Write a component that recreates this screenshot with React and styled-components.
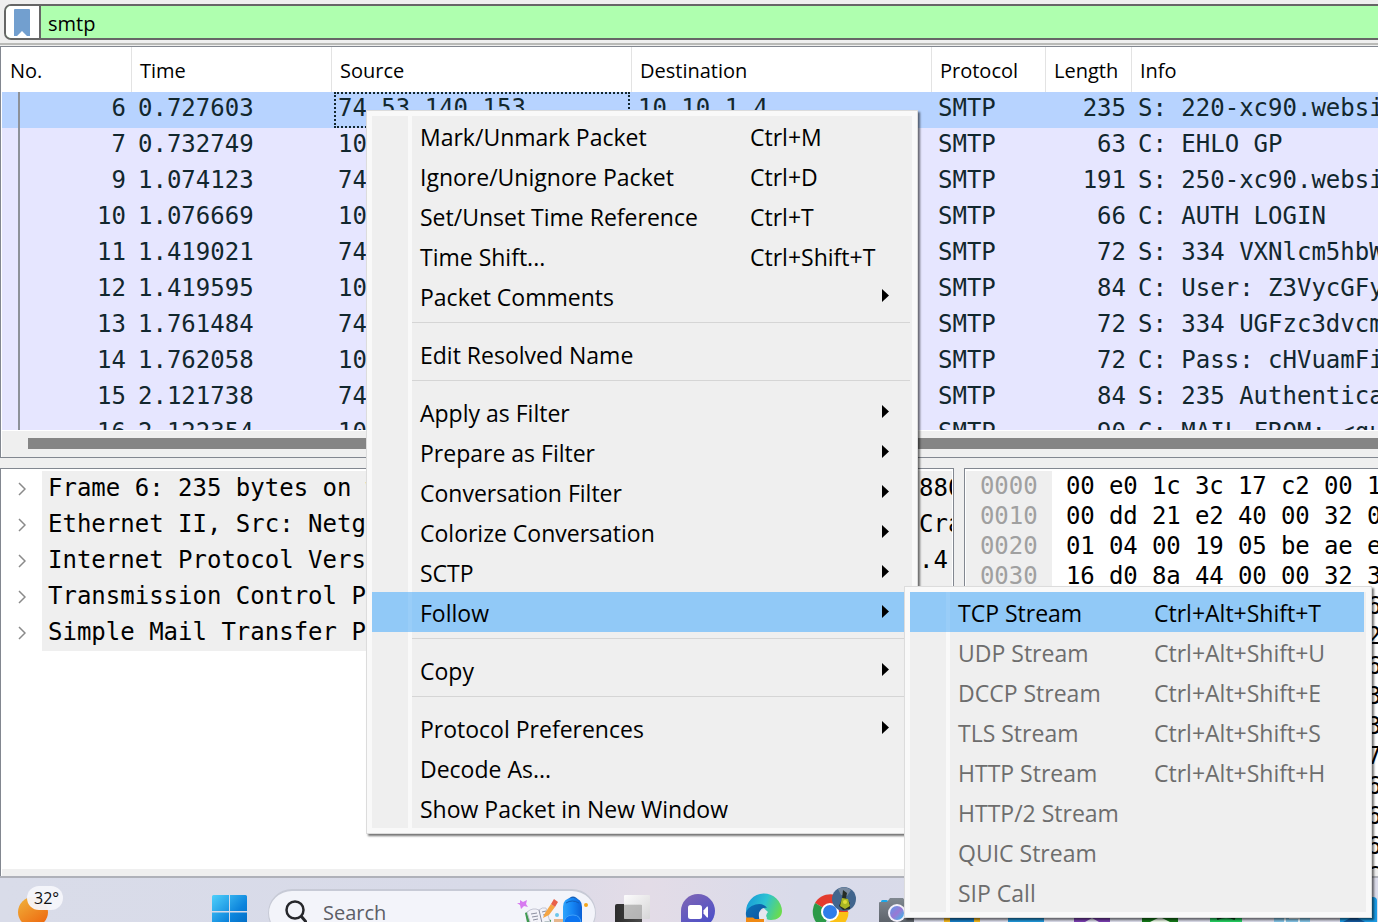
import React from "react";
import styled, { createGlobalStyle, css } from "styled-components";

const GlobalStyle = createGlobalStyle`
  * { box-sizing: border-box; }
  html, body { margin: 0; overflow: hidden; }
  body { background: #efefef; font-family: "Open Sans", "Noto Sans", sans-serif; color: #000; }
  button, input { font: inherit; color: inherit; }
`;

const mono = css`
  font-family: "DejaVu Sans Mono", "Liberation Mono", monospace;
  font-size: 24px;
`;

const Screen = styled.div`
  position: relative;
  display: flex;
  flex-direction: column;
  width: 100%;
  height: 100vh;
  overflow: hidden;
`;

/* ---------- filter bar ---------- */

const FilterBar = styled.form`
  flex: none;
  padding: 4px 0 3px 4px;
  border-bottom: 2px solid #b9bab7;
  margin: 0 0 1px;
`;

const FilterBox = styled.div`
  display: flex;
  height: 36px;
  border: 2px solid #666;
  border-right: 0;
  border-radius: 7px 0 0 7px;
  background: #afffaf;
  overflow: hidden;
`;

const BookmarkButton = styled.button`
  width: 35px;
  padding: 2px 0 0 8px;
  border: 0;
  border-right: 2px solid #666;
  background: #fff;
  text-align: left;
  svg { display: block; }
`;

const FilterInput = styled.input`
  flex: 1;
  min-width: 0;
  padding: 2px 0 0 7px;
  border: 0;
  outline: 0;
  background: transparent;
  font-size: 20px;
`;

/* ---------- packet list ---------- */

const ListFrame = styled.section`
  flex: 411 1 0;
  min-height: 0;
  display: flex;
  flex-direction: column;
  border: 1px solid #828790;
  border-right: 0;
  padding-left: 1px;
  background: #fff;
`;

const ListViewport = styled.div`
  flex: 1;
  min-height: 0;
  overflow: hidden;
`;

const PacketTable = styled.table`
  width: 100%;
  table-layout: fixed;
  border-collapse: separate;
  border-spacing: 0;
  white-space: nowrap;
`;

const Col = styled.col`
  width: ${(p) => (p.$w ? p.$w + "px" : "auto")};
`;

const HeadCell = styled.th`
  height: 45px;
  padding: 2px 0 0 8px;
  border-left: ${(p) => (p.$first ? "0" : "1px solid #e3e3e3")};
  overflow: hidden;
  text-align: left;
  font-size: 20px;
  font-weight: 400;
`;

const PacketRow = styled.tr`
  background: ${(p) => (p.$selected ? "#b7d3ff" : "#e6e6ff")};
  color: #12272e;
`;

const Cell = styled.td`
  ${mono}
  height: 36px;
  padding: 0 0 4px 7px;
  line-height: 32px;
  overflow: hidden;
  ${(p) => p.$number && css`
    padding-right: 5px;
    text-align: right;
  `}
  ${(p) => p.$rail && css`
    background: linear-gradient(#8c9199, #8c9199) 16px 0 / 2px 100% no-repeat;
  `}
  ${(p) => p.$focused && css`
    padding: 0 1px 0 3px;
  `}
`;

const FocusBox = styled.div`
  height: 36px;
  padding-left: 2px;
  border: 2px dotted #12272e;
  line-height: 28px;
`;

const ScrollTrack = styled.div`
  flex: none;
  height: 26px;
  margin-top: 1px;
  padding: 7px 0 8px 26px;
  background: #efefef;
`;

const ScrollThumb = styled.div`
  height: 11px;
  background: #858585;
`;

/* ---------- lower panes ---------- */

const LowerPanes = styled.div`
  flex: 409 1 0;
  min-height: 0;
  display: flex;
  gap: 10px;
  margin-top: 10px;
`;

const Pane = styled.section`
  display: flex;
  flex-direction: column;
  min-width: 0;
  border: 1px solid #828790;
  border-width: 1px 0 0 1px;
  background: #fff;
`;

const TreePane = styled(Pane)`
  flex: 954 1 0;
  border-right-width: 1px;
`;

const HexPane = styled(Pane)`
  flex: 414 1 0;
`;

const PaneBody = styled.div`
  flex: 1;
  min-height: 0;
  overflow: hidden;
  padding: 2px 1px 0;
`;

const PaneFoot = styled.div`
  flex: none;
  height: 7px;
  margin-left: 1px;
  background: #efefef;
`;

const Tree = styled.ul`
  margin: 0;
  padding: 0;
  list-style: none;
`;

const TreeRow = styled.li`
  ${mono}
  display: grid;
  grid-template-columns: 40px 870px 1fr;
  height: 36px;
  white-space: pre;
  line-height: 34px;
`;

const Twisty = styled.button`
  display: flex;
  align-items: center;
  justify-content: center;
  padding: 0;
  border: 0;
  background: transparent;
`;

const TreeText = styled.span`
  min-width: 0;
  padding-left: ${(p) => (p.$tail ? "7px" : "6px")};
  overflow: hidden;
  background: #efefef;
`;

const HexLine = styled.div`
  ${mono}
  display: grid;
  grid-template-columns: 86px repeat(8, 43px);
  height: 30px;
  line-height: 30px;
`;

const HexOffset = styled.span`
  padding-left: 14px;
  background: #efefef;
  color: #a0a0a0;
`;

const HexByte = styled.span`
  padding-left: 14px;
  white-space: nowrap;
`;

/* ---------- context menus ---------- */

const MenuPanel = styled.ul`
  position: absolute;
  z-index: ${(p) => (p.$sub ? 3 : 2)};
  left: ${(p) => (p.$sub ? "calc(100% - 8px)" : "366px")};
  top: ${(p) => (p.$sub ? "-6px" : "110px")};
  width: ${(p) => (p.$sub ? "468px" : "552px")};
  margin: 0;
  padding: 5px;
  border: 1px solid #dcdcdc;
  background-color: #f9f9f9;
  background-image: linear-gradient(#f9f9f9, #f9f9f9), linear-gradient(#efefef, #efefef);
  background-position: 36px 0, 0 0;
  background-size: 4px 100%, 100% 100%;
  background-repeat: no-repeat;
  background-origin: content-box;
  box-shadow: 2px 2px 2px rgba(0, 0, 0, 0.55);
  list-style: none;
  white-space: nowrap;
`;

const MenuItem = styled.li`
  position: relative;
`;

const MenuButton = styled.button`
  display: grid;
  grid-template-columns: ${(p) => (p.$sub ? "196px" : "330px")} 1fr;
  align-items: center;
  width: calc(100% - 2px);
  height: 40px;
  padding: 2px 21px 0 48px;
  border: 0;
  background: ${(p) => (p.$active
    ? "linear-gradient(#99cdf8, #99cdf8) 36px 0 / 4px 100% no-repeat, #91c9f7"
    : "transparent")};
  color: ${(p) => (p.disabled ? "#6d6d6d" : "#000")};
  font-size: 23px;
  line-height: 34px;
  text-align: left;
`;

const Arrow = styled.svg`
  justify-self: end;
  margin-bottom: 4px;
`;

const Divider = styled.li`
  height: 18px;
  margin: 0 2px 0 40px;
  padding-top: 6px;
  &::before {
    content: "";
    display: block;
    height: 1px;
    background: #d5d5d5;
  }
`;

/* ---------- taskbar ---------- */

const Taskbar = styled.nav`
  flex: none;
  display: flex;
  height: 46px;
  overflow: hidden;
  border-top: 2px solid #afb1b9;
  background: linear-gradient(90deg, #d9dce9 0%, #d8dae8 36%, #e3dce7 47%, #d9dbea 58%, #dcdcea 100%);
`;

const Weather = styled.button`
  flex: none;
  width: 212px;
  padding: 0;
  border: 0;
  background: transparent;
  text-align: left;
  svg { display: block; }
`;

const StartButton = styled.button`
  flex: none;
  width: 56px;
  height: 51px;
  padding: 16px 0 0;
  border: 0;
  background: transparent;
  svg { display: block; }
`;

const SearchBox = styled.label`
  display: flex;
  flex: none;
  width: 328px;
  height: 48px;
  margin: 11px 3px 0 0;
  padding-left: 16px;
  border: 1px solid #c7cad6;
  border-top-width: 2px;
  border-radius: 24px;
  background: #f3f4fa;
  svg { flex: none; }
`;

const SearchInput = styled.input`
  width: 191px;
  height: 40px;
  padding: 2px 0 0 16px;
  border: 0;
  outline: 0;
  background: transparent;
  font-size: 20px;
  &::placeholder { color: #5c5e66; opacity: 1; }
`;

const AppButton = styled.button`
  flex: none;
  width: 66px;
  height: 44px;
  padding: 0;
  border: 0;
  background: transparent;
  svg { display: block; }
`;

const columns = [
  ["No.", 129], ["Time", 200], ["Source", 300], ["Destination", 300],
  ["Protocol", 114], ["Length", 86], ["Info", 0],
];

const SERVER = "74.53.140.153";
const CLIENT = "10.10.1.4";

const packets = [
  [6, "0.727603", 235, "S: 220-xc90.websitewelcome.com"],
  [7, "0.732749", 63, "C: EHLO GP"],
  [9, "1.074123", 191, "S: 250-xc90.websitewelcome.com"],
  [10, "1.076669", 66, "C: AUTH LOGIN"],
  [11, "1.419021", 72, "S: 334 VXNlcm5hbWU6"],
  [12, "1.419595", 84, "C: User: Z3VycGFydGFw"],
  [13, "1.761484", 72, "S: 334 UGFzc3dvcmQ6"],
  [14, "1.762058", 72, "C: Pass: cHVuamFiQDEyMw=="],
  [15, "2.121738", 84, "S: 235 Authentication succeeded"],
  [16, "2.122354", 90, "C: MAIL FROM: <gurpartap"],
];

const layers = [
  ["Frame 6: 235 bytes on wire (1880 bits), 235 bytes captured (1", "880 bits)"],
  ["Ethernet II, Src: Netgear_d9:81:60", "Cradlepoint"],
  ["Internet Protocol Version 4, Src: 74.53.140.153, Dst: 10.10.1", ".4"],
  ["Transmission Control Protocol", ""],
  ["Simple Mail Transfer Protocol", ""],
];

const hexRows = [
  "00 e0 1c 3c 17 c2 00 1f", "00 dd 21 e2 40 00 32 06",
  "01 04 00 19 05 be ae e2", "16 d0 8a 44 00 00 32 32",
  "65 62 73 69 74 65 77 65", "6d 20 45 53 4d 54 50 20",
  "39 20 23 31 20 4d 6f 6e", "20 32 30 30 39 20 30 31",
  "30 35 30 30 20 0d 0a 32", "20 6e 6f 74 20 61 75 74",
  "68 65 20 75 73 65 20 6f", "79 73 74 65 6d 20 74 6f",
  "72 74 20 75 6e 73 6f 6c", "0d 0a 32 32 30 20 61 6e",
].map((row) => row.split(" "));

const followItems = [
  { label: "TCP Stream", keys: "Ctrl+Alt+Shift+T", active: true },
  { label: "UDP Stream", keys: "Ctrl+Alt+Shift+U", disabled: true },
  { label: "DCCP Stream", keys: "Ctrl+Alt+Shift+E", disabled: true },
  { label: "TLS Stream", keys: "Ctrl+Alt+Shift+S", disabled: true },
  { label: "HTTP Stream", keys: "Ctrl+Alt+Shift+H", disabled: true },
  { label: "HTTP/2 Stream", disabled: true },
  { label: "QUIC Stream", disabled: true },
  { label: "SIP Call", disabled: true },
];

const packetItems = [
  { label: "Mark/Unmark Packet", keys: "Ctrl+M" },
  { label: "Ignore/Unignore Packet", keys: "Ctrl+D" },
  { label: "Set/Unset Time Reference", keys: "Ctrl+T" },
  { label: "Time Shift...", keys: "Ctrl+Shift+T" },
  { label: "Packet Comments", more: true },
  null,
  { label: "Edit Resolved Name" },
  null,
  { label: "Apply as Filter", more: true },
  { label: "Prepare as Filter", more: true },
  { label: "Conversation Filter", more: true },
  { label: "Colorize Conversation", more: true },
  { label: "SCTP", more: true },
  { label: "Follow", more: true, active: true, items: followItems },
  null,
  { label: "Copy", more: true },
  null,
  { label: "Protocol Preferences", more: true },
  { label: "Decode As..." },
  { label: "Show Packet in New Window" },
];

function Menu({ items, sub }) {
  return (
    <MenuPanel role="menu" $sub={sub}>
      {items.map((item, i) =>
        item === null ? (
          <Divider key={i} role="separator" />
        ) : (
          <MenuItem key={i} role="none">
            <MenuButton type="button" role="menuitem" $sub={sub} $active={item.active} disabled={item.disabled}>
              <span>{item.label}</span>
              {item.keys && <span>{item.keys}</span>}
              {item.more && (
                <Arrow width="7" height="13" viewBox="0 0 7 13" aria-hidden="true">
                  <path d="M0 0L7 6.5L0 13Z" fill="#000" />
                </Arrow>
              )}
            </MenuButton>
            {item.items && <Menu items={item.items} sub />}
          </MenuItem>
        )
      )}
    </MenuPanel>
  );
}

const apps = [
  ["Task View", (
    <>
      <defs>
        <linearGradient id="tvDark" x1="0" y1="0" x2="1" y2="0"><stop offset="0" stopColor="#2c2c2c" /><stop offset="1" stopColor="#4a4a4a" /></linearGradient>
        <linearGradient id="tvLight" x1="0" y1="0" x2="1" y2="1"><stop offset="0" stopColor="#fff" /><stop offset="1" stopColor="#d5d5d5" /></linearGradient>
      </defs>
      <rect x="16" y="26" width="27" height="24" rx="2" fill="url(#tvDark)" />
      <rect x="25" y="17" width="26" height="24" rx="1" fill="url(#tvLight)" opacity="0.9" />
      <path d="M25 27H43V41H25Z" fill="#9d9d9d" opacity="0.55" />
    </>
  )],
  ["Chat", (
    <>
      <defs><linearGradient id="chat" x1="0" y1="0" x2="0.6" y2="1"><stop offset="0" stopColor="#8166b4" /><stop offset="1" stopColor="#4c50c8" /></linearGradient></defs>
      <path d="M16 33A17 17 0 1 1 33 50H16Z" fill="url(#chat)" />
      <rect x="23" y="27" width="14" height="14" rx="2.5" fill="#fff" />
      <path d="M38.500 32.500L42 28.500Q43 28 43 29.500V38.500Q43 40 42 39.500L38.500 35.500Z" fill="#fff" />
    </>
  )],
  ["Microsoft Edge", (
    <>
      <defs>
        <linearGradient id="edgeTop" x1="0" y1="0.3" x2="1" y2="0.6"><stop offset="0" stopColor="#199bd8" /><stop offset="0.5" stopColor="#2cc3d2" /><stop offset="1" stopColor="#6bdc4c" /></linearGradient>
        <linearGradient id="edgeLow" x1="0" y1="0" x2="1" y2="1"><stop offset="0" stopColor="#0c72b8" /><stop offset="1" stopColor="#0c4f9c" /></linearGradient>
      </defs>
      <path d="M15 34A18 18 0 0 1 51 33C51 39 46 42 40 42C35 42 33 40 35 37C38 31 29 24 15 34Z" fill="url(#edgeTop)" />
      <path d="M15 34C19 26 32 23 36 30C31 29 27 33 28 39L30 46H20Q14 42 15 34Z" fill="url(#edgeLow)" />
      <path d="M28 37A5 5 0 0 1 37 34Q34 37 36 40L33 46H29Z" fill="#e6e7ef" />
      <path d="M15 39.500H22L24 41H33V46H15Z" fill="#f08a14" />
    </>
  )],
  ["Google Chrome", (
    <>
      <path d="M33.500 34L18 25A18 18 0 0 1 49 25L51 34Z" fill="#e33b2e" />
      <path d="M33.500 34L18 25A18 18 0 0 0 26 50Z" fill="#2b9a48" />
      <path d="M33.500 34H51.500A18 18 0 0 1 33 52Z" fill="#fbc116" />
      <circle cx="33" cy="34" r="9" fill="#fff" />
      <circle cx="33" cy="34" r="7" fill="#2f7de9" />
      <circle cx="47" cy="21" r="12" fill="#41658d" />
      <path d="M41 11Q48 7 54 12L50 18L44 17Z" fill="#788aa0" />
      <path d="M46 12L50 15L49 20L53 25L53 31L46 32L42 28L45 21Z" fill="#252c25" />
      <path d="M45 20L51 21L53 28L48 31L43 28L44 24Z" fill="#a9b624" />
      <circle cx="48" cy="24" r="2" fill="#e0de39" />
    </>
  )],
  ["Camera", (
    <>
      <defs>
        <linearGradient id="lens" x1="0" y1="0" x2="1" y2="1"><stop offset="0" stopColor="#5a9be8" /><stop offset="0.5" stopColor="#9a78d4" /><stop offset="1" stopColor="#2fc0ec" /></linearGradient>
        <linearGradient id="cam" x1="0" y1="0" x2="0" y2="1"><stop offset="0" stopColor="#808890" /><stop offset="1" stopColor="#555a62" /></linearGradient>
      </defs>
      <rect x="18" y="22" width="7" height="5" rx="1.500" fill="#1ba6e8" />
      <path d="M16 25Q16 24 17 24H24L27 20H40L43 24H51V50H16Z" fill="url(#cam)" />
      <circle cx="34" cy="35" r="9" fill="#f3f0fa" />
      <circle cx="34" cy="35" r="7" fill="url(#lens)" />
    </>
  )],
  ["File Explorer", <><rect x="15" y="38" width="36" height="6" fill="#f2b61c" /><rect x="21" y="38" width="24" height="6" fill="#187dc4" /></>],
  ["Visual Studio Code", <rect x="13" y="36" width="36" height="8" fill="#2196d8" />],
  ["Visual Studio", <path d="M13 36H49V44H13ZM24 44L31 40L38 44Z" fill="#7a3fb0" fillRule="evenodd" />],
  ["Xbox", <><rect x="15" y="36" width="36" height="8" fill="#147a18" /><path d="M23 44L33 39L43 44Z" fill="#e8f4e4" /></>],
  ["Spotify", <><rect x="17" y="36" width="32" height="8" fill="#24cf60" /><path d="M24 41Q33 37 42 41" stroke="#0b3518" strokeWidth="2" fill="none" /></>],
  ["Notepad", <><rect x="15" y="36" width="36" height="8" fill="#83c2e4" /><path d="M26 36V44M30 40H40V44" stroke="#eaf6fc" strokeWidth="2" fill="none" /></>],
  ["Wireshark", <><rect x="15" y="19" width="37" height="28" rx="4" fill="#1c9be4" /><path d="M18 44L29 38L40 44Z" fill="#14579c" /></>],
];

export default function App() {
  return (
    <Screen>
      <GlobalStyle />
      <FilterBar>
        <FilterBox>
          <BookmarkButton type="button" aria-label="Saved filters">
            <svg width="16" height="28" viewBox="0 0 16 28">
              <path d="M1 0H15Q16 0 16 1V27L13 27L8 22L3 27L0 27V1Q0 0 1 0Z" fill="#729fcf" />
            </svg>
          </BookmarkButton>
          <FilterInput aria-label="Display filter" defaultValue="smtp" spellCheck={false} />
        </FilterBox>
      </FilterBar>

      <ListFrame>
        <ListViewport>
          <PacketTable>
            <colgroup>
              {columns.map(([name, w]) => <Col key={name} $w={w} />)}
            </colgroup>
            <thead>
              <tr>
                {columns.map(([name], i) => <HeadCell key={name} scope="col" $first={i === 0}>{name}</HeadCell>)}
              </tr>
            </thead>
            <tbody>
              {packets.map(([no, time, length, info], i) => {
                const fromServer = info[0] === "S";
                const source = fromServer ? SERVER : CLIENT;
                return (
                  <PacketRow key={no} $selected={i === 0}>
                    <Cell $number $rail>{no}</Cell>
                    <Cell>{time}</Cell>
                    <Cell $focused={i === 0}>{i === 0 ? <FocusBox>{source}</FocusBox> : source}</Cell>
                    <Cell>{fromServer ? CLIENT : SERVER}</Cell>
                    <Cell>SMTP</Cell>
                    <Cell $number>{length}</Cell>
                    <Cell>{info}</Cell>
                  </PacketRow>
                );
              })}
            </tbody>
          </PacketTable>
        </ListViewport>
        <ScrollTrack><ScrollThumb /></ScrollTrack>
      </ListFrame>

      <LowerPanes>
        <TreePane>
          <PaneBody>
            <Tree>
              {layers.map(([head, tail]) => (
                <TreeRow key={head}>
                  <Twisty type="button" aria-label="Expand">
                    <svg width="8" height="14" viewBox="0 0 8 14">
                      <path d="M1 1L7 7L1 13" fill="none" stroke="#8a8a8a" strokeWidth="1.500" />
                    </svg>
                  </Twisty>
                  <TreeText>{head}</TreeText>
                  <TreeText $tail>{tail}</TreeText>
                </TreeRow>
              ))}
            </Tree>
          </PaneBody>
          <PaneFoot />
        </TreePane>
        <HexPane>
          <PaneBody>
            {hexRows.map((bytes, i) => (
              <HexLine key={i}>
                <HexOffset>{(i * 16).toString(16).padStart(4, "0")}</HexOffset>
                {bytes.map((b, j) => <HexByte key={j}>{b}</HexByte>)}
              </HexLine>
            ))}
          </PaneBody>
          <PaneFoot />
        </HexPane>
      </LowerPanes>

      <Taskbar>
        <Weather type="button" aria-label="Weather">
          <svg width="70" height="44" viewBox="0 0 70 44">
            <defs>
              <linearGradient id="sun" x1="0" y1="0" x2="0.7" y2="1"><stop offset="0" stopColor="#f0b43c" /><stop offset="1" stopColor="#ee6a10" /></linearGradient>
            </defs>
            <circle cx="33" cy="34" r="15" fill="url(#sun)" />
            <rect x="27" y="8" width="36" height="24" rx="12" fill="#f5f6fb" opacity="0.95" />
            <text x="34" y="26" fontFamily="Open Sans, sans-serif" fontSize="16" fill="#111">32°</text>
          </svg>
        </Weather>
        <StartButton type="button" aria-label="Start">
          <svg width="35" height="35" viewBox="0 0 35 35">
            <defs>
              <linearGradient id="win" x1="0" y1="0" x2="1" y2="1"><stop offset="0" stopColor="#4fd0fb" /><stop offset="0.6" stopColor="#0c84dc" /><stop offset="1" stopColor="#0068c0" /></linearGradient>
            </defs>
            <path d="M1.500 1H17V17H0V2.500Q0 1 1.500 1ZM18 1H33.500Q35 1 35 2.500V17H18ZM0 18.500H17V35H0ZM18 18.500H35V35H18Z" fill="url(#win)" />
          </svg>
        </StartButton>
        <SearchBox>
          <svg width="22" height="36" viewBox="0 0 22 36" fill="none" stroke="#26272b" strokeWidth="2.500">
            <circle cx="10" cy="19" r="8.500" />
            <path d="M16 25L22 32" strokeWidth="3" />
          </svg>
          <SearchInput type="search" aria-label="Search" placeholder="Search" />
          <svg width="98" height="36" viewBox="0 0 98 36">
            <defs>
              <linearGradient id="bag" x1="0" y1="0" x2="1" y2="0"><stop offset="0" stopColor="#2fa4fb" /><stop offset="0.5" stopColor="#1585f4" /><stop offset="1" stopColor="#0a5fd6" /></linearGradient>
            </defs>
            <path d="M22 9L25 11L29 9L28 13L30 16L26 15L23 18L22 14L19 12L22 12Z" fill="#d77af0" />
            <path d="M27 22L31 20L53 29V36H30Z" fill="#3f9a50" />
            <path d="M29 21Q35 16 41 19Q44 16 48 17L52 31Q47 29 44 33Q38 29 33 34Z" fill="#f2f2f8" stroke="#c4c6d4" />
            <path d="M41 19L44 32M33 23L39 22M34 26L40 25M35 29L40 28M44 21L48 20M45 24L49 23" stroke="#8d90a0" fill="none" />
            <path d="M47 22L53 13L57 16L51 24L45 27Z" fill="#f5a543" />
            <path d="M53 13L56 8L60 11L57 16Z" fill="#e8604a" />
            <circle cx="59" cy="24" r="2" fill="#6cc6ea" />
            <path d="M56 28H66V36H56Z" fill="#e6b68c" />
            <path d="M70 10Q75 3 80 10" stroke="#1660b8" strokeWidth="2" fill="none" />
            <path d="M65 36V16Q65 7 74.500 7Q84 7 84 16V36Z" fill="url(#bag)" />
            <path d="M68 12Q74 8 81 12" stroke="#0f5cb8" fill="none" />
            <path d="M66 33Q66 24 75 24Q83 24 83 33V36H66Z" fill="#0c74f0" stroke="#3fa0fa" />
            <circle cx="88" cy="14" r="2" fill="#f5a51c" />
          </svg>
        </SearchBox>
        {apps.map(([name, art]) => (
          <AppButton key={name} type="button" aria-label={name}>
            <svg width="66" height="44" viewBox="0 0 66 44">{art}</svg>
          </AppButton>
        ))}
      </Taskbar>

      <Menu items={packetItems} />
    </Screen>
  );
}
